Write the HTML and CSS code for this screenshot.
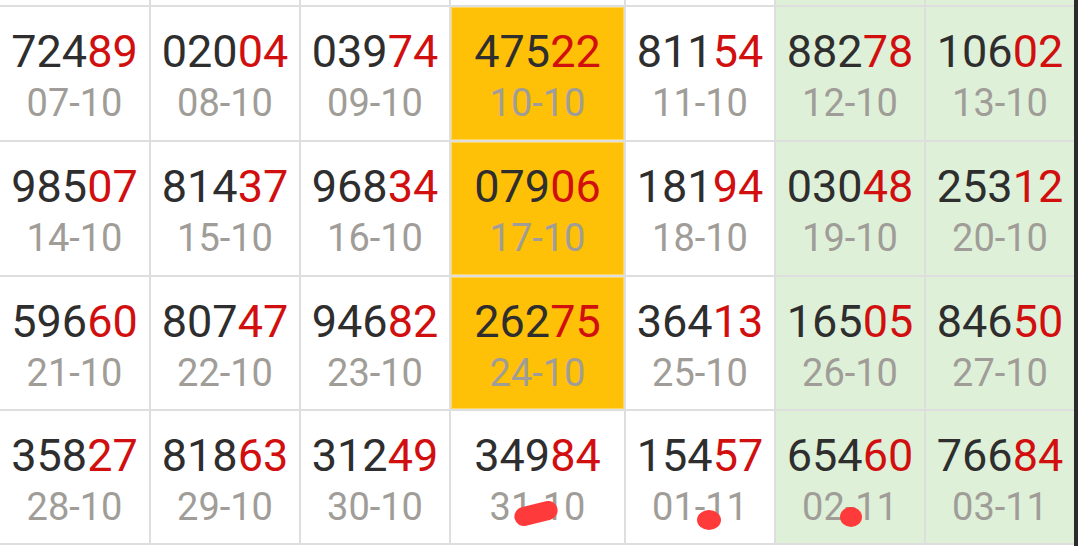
FILE: index.html
```html
<!DOCTYPE html>
<html>
<head>
<meta charset="utf-8">
<link rel="stylesheet" href="styles.css">
</head>
<body>
<div class="page">
  <div class="grid">
    <div class="cell strip"></div><div class="cell strip"></div><div class="cell strip"></div><div class="cell strip"></div><div class="cell strip"></div><div class="cell strip green"></div><div class="cell strip green"></div>

    <div class="cell"><div class="num">724<b>89</b></div><div class="date">07-10</div></div>
    <div class="cell"><div class="num">020<b>04</b></div><div class="date">08-10</div></div>
    <div class="cell"><div class="num">039<b>74</b></div><div class="date">09-10</div></div>
    <div class="cell yellow"><div class="num">475<b>22</b></div><div class="date">10-10</div></div>
    <div class="cell"><div class="num">811<b>54</b></div><div class="date">11-10</div></div>
    <div class="cell green"><div class="num">882<b>78</b></div><div class="date">12-10</div></div>
    <div class="cell green"><div class="num">106<b>02</b></div><div class="date">13-10</div></div>

    <div class="cell"><div class="num">985<b>07</b></div><div class="date">14-10</div></div>
    <div class="cell"><div class="num">814<b>37</b></div><div class="date">15-10</div></div>
    <div class="cell"><div class="num">968<b>34</b></div><div class="date">16-10</div></div>
    <div class="cell yellow"><div class="num">079<b>06</b></div><div class="date">17-10</div></div>
    <div class="cell"><div class="num">181<b>94</b></div><div class="date">18-10</div></div>
    <div class="cell green"><div class="num">030<b>48</b></div><div class="date">19-10</div></div>
    <div class="cell green"><div class="num">253<b>12</b></div><div class="date">20-10</div></div>

    <div class="cell"><div class="num">596<b>60</b></div><div class="date">21-10</div></div>
    <div class="cell"><div class="num">807<b>47</b></div><div class="date">22-10</div></div>
    <div class="cell"><div class="num">946<b>82</b></div><div class="date">23-10</div></div>
    <div class="cell yellow"><div class="num">262<b>75</b></div><div class="date">24-10</div></div>
    <div class="cell"><div class="num">364<b>13</b></div><div class="date">25-10</div></div>
    <div class="cell green"><div class="num">165<b>05</b></div><div class="date">26-10</div></div>
    <div class="cell green"><div class="num">846<b>50</b></div><div class="date">27-10</div></div>

    <div class="cell"><div class="num">358<b>27</b></div><div class="date">28-10</div></div>
    <div class="cell"><div class="num">818<b>63</b></div><div class="date">29-10</div></div>
    <div class="cell"><div class="num">312<b>49</b></div><div class="date">30-10</div></div>
    <div class="cell"><div class="num">349<b>84</b></div><div class="date">31-10</div><span class="mark mark-a"></span></div>
    <div class="cell"><div class="num">154<b>57</b></div><div class="date">01-11</div><span class="mark mark-b"></span></div>
    <div class="cell green"><div class="num">654<b>60</b></div><div class="date">02-11</div><span class="mark mark-c"></span></div>
    <div class="cell green"><div class="num">766<b>84</b></div><div class="date">03-11</div></div>
  </div>
  <div class="bar"></div>
</div>
</body>
</html>
```
FILE: styles.css
```css
html, body {
  margin: 0;
  padding: 0;
  background: #ffffff;
}
body {
  width: 1078px;
  height: 546px;
  overflow: hidden;
  font-family: Roboto, "Liberation Sans", sans-serif;
}
.page {
  display: flex;
  width: 1078px;
  height: 546px;
  background: #ffffff;
}
.grid {
  display: grid;
  grid-template-columns: 149px 148px 148px 173px 148px 148px 148px;
  grid-template-rows: 5px 133px 133px 132px 132px;
  column-gap: 2px;
  row-gap: 2px;
  width: 1074px;
  height: 543px;
  padding-bottom: 2px;
  background: #dedede;
  align-self: flex-start;
}
.cell {
  position: relative;
  background: #ffffff;
  display: flex;
  flex-direction: column;
  align-items: center;
  padding-top: 20px;
  box-sizing: border-box;
}
.cell.strip {
  padding-top: 0;
}
.cell.yellow {
  background: #ffc107;
  box-shadow: inset 0 0 0 1px rgba(255, 255, 255, 0.35);
}
.cell.green {
  background: #dff0d8;
}
.num {
  font-size: 45px;
  line-height: 50px;
  color: #2e2e2e;
  white-space: nowrap;
}
.num b {
  font-weight: 400;
  color: #d10f0f;
}
.date {
  font-size: 38px;
  line-height: 47px;
  padding-top: 3px;
  color: #a09d98;
  white-space: nowrap;
}
.bar {
  width: 4px;
  height: 546px;
  background: #2b2b2b;
}
.mark {
  position: absolute;
  background: #ff3a3a;
  border-radius: 50%;
}
.mark-a {
  left: 63px;
  top: 93px;
  width: 44px;
  height: 19px;
  border-radius: 10px;
  transform: rotate(-14deg);
}
.mark-b {
  left: 71px;
  top: 99px;
  width: 24px;
  height: 20px;
}
.mark-c {
  left: 64px;
  top: 96px;
  width: 22px;
  height: 20px;
}
```
